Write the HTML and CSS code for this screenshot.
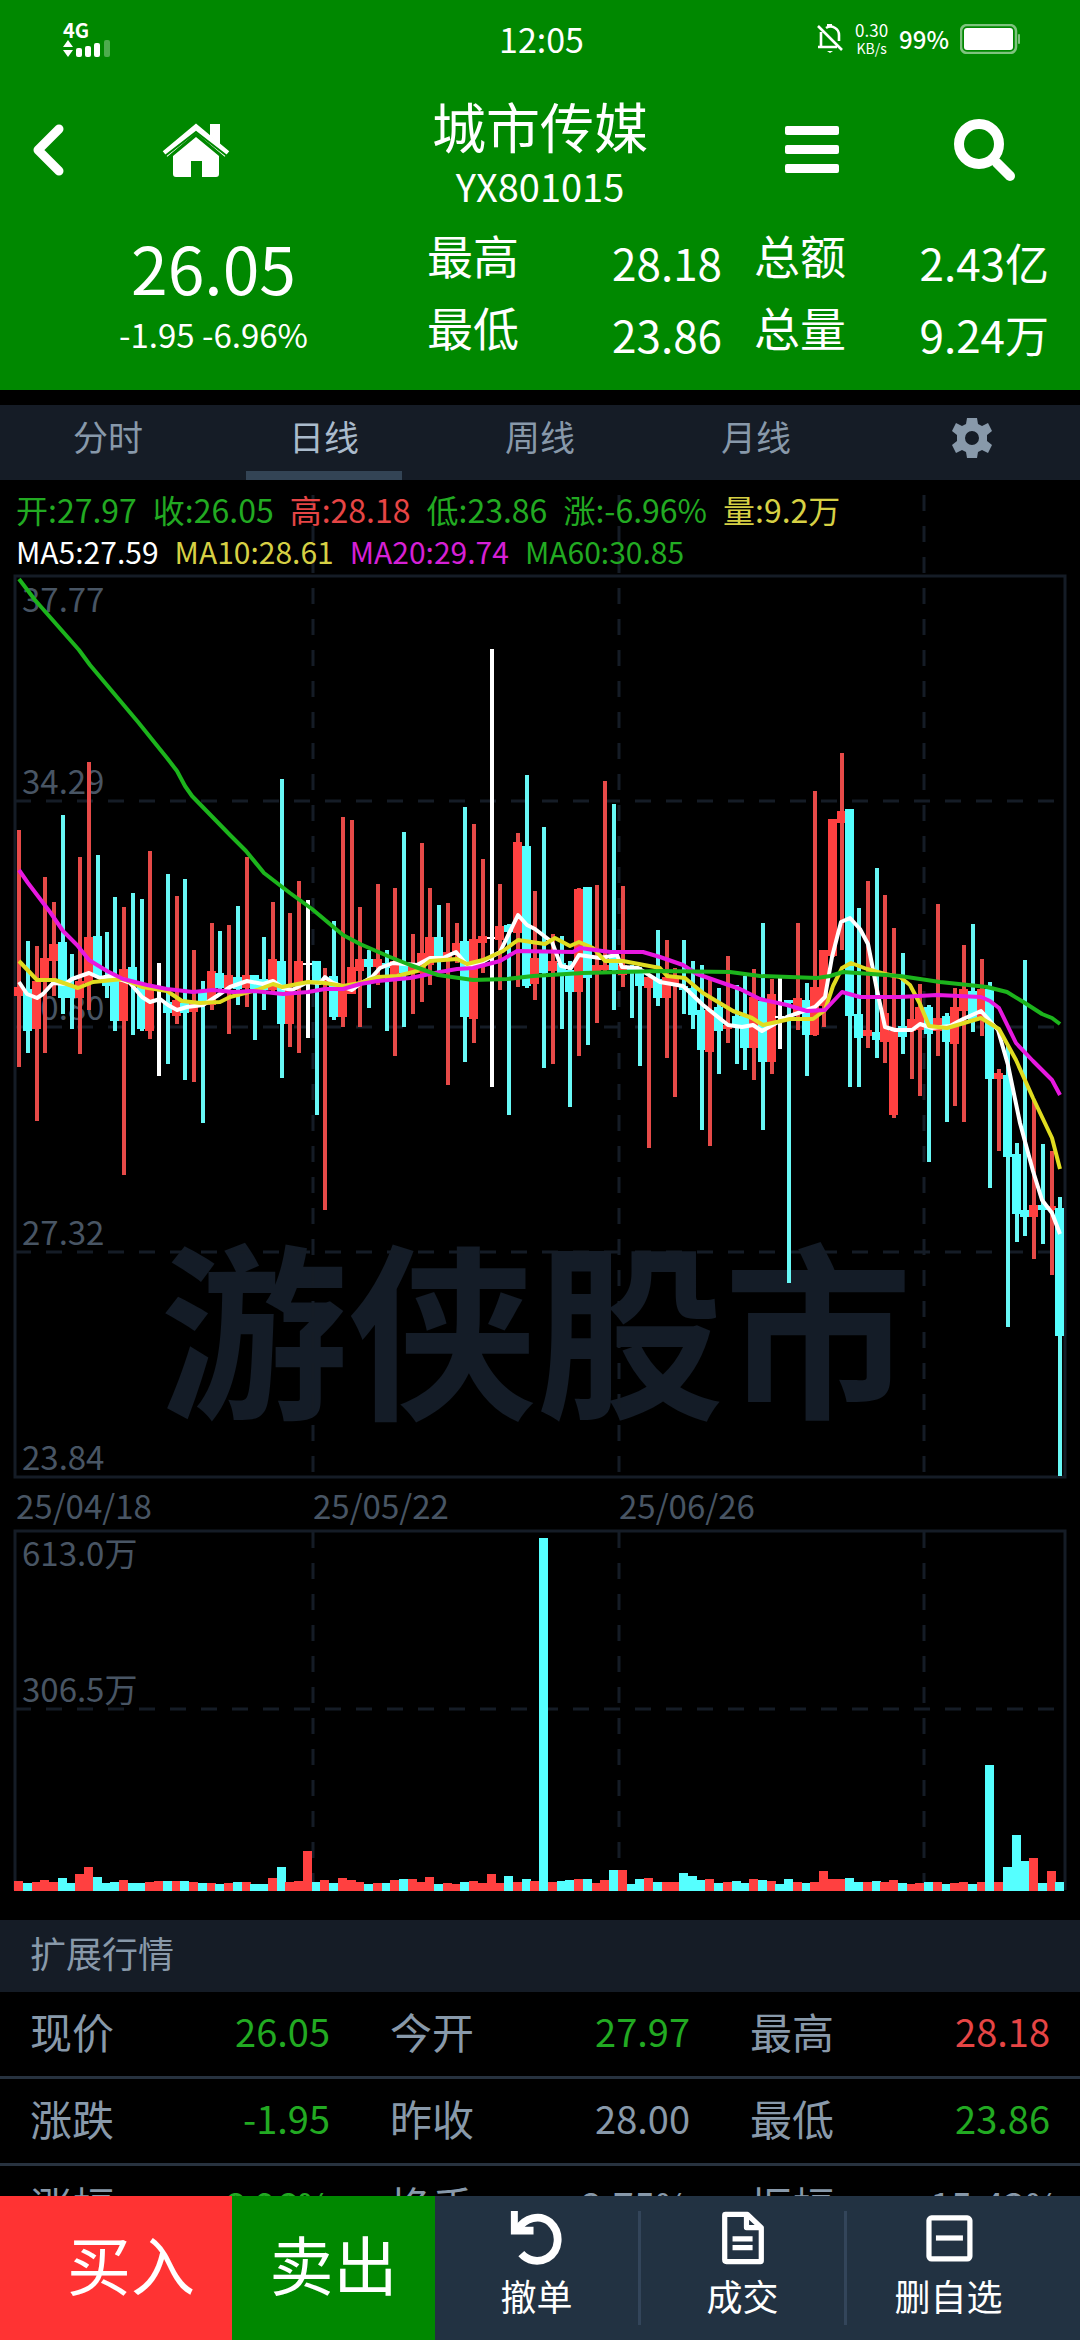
FILE: index.html
```html
<!DOCTYPE html>
<html lang="zh-CN">
<head>
    <meta charset="UTF-8">
    <meta name="viewport" content="width=device-width, initial-scale=1.0">
    <title>城市传媒 YX801015</title>
    <link rel="stylesheet" href="styles.css">
</head>
<body>
    <header class="header">
        <!-- Status bar -->
        <div class="status">
            <div class="status-left">
                <span class="network">4G</span>
                <svg width="48" height="18" viewBox="0 0 48 18" fill="#fff">
                    <path d="M0 7l5-7 5 7zM0 10l5 7 5-7z"/>
                    <rect x="13" y="8" width="6" height="9" rx="2"/>
                    <rect x="22" y="6" width="6" height="11" rx="2"/>
                    <rect x="31" y="3" width="6" height="14" rx="2"/>
                    <rect x="41" y="0" width="6" height="17" rx="2" opacity="0.3"/>
                </svg>
            </div>
            <span class="clock">12:05</span>
            <div class="status-right">
                <svg width="28" height="30" viewBox="0 0 28 30" fill="none" stroke="#fff" stroke-width="2.6">
                    <path d="M2 2L26 26M5 8v15M2 23h19M10 4c6-4 13 1 13 7v6"/>
                    <path d="M11 27h6l-3 2z" fill="#fff" stroke="none"/>
                    <path d="M11 1h5" />
                </svg>
                <span class="speed"><span>0.30</span><span class="unit">KB/s</span></span>
                <span class="percent">99%</span>
                <svg width="60" height="30" viewBox="0 0 60 30">
                    <rect x="1" y="1" width="55" height="28" rx="6" fill="none" stroke="#7fc37f" stroke-width="2.5"/>
                    <rect x="4" y="4" width="49" height="22" rx="3" fill="#fff"/>
                    <rect x="58" y="10" width="2" height="10" rx="1" fill="#7fc37f"/>
                </svg>
            </div>
        </div>

        <!-- Title row -->
        <nav class="nav">
            <button type="button" class="back" aria-label="返回">
                <svg width="34" height="54" viewBox="0 0 34 54" fill="none" stroke="#fff" stroke-width="9" stroke-linecap="round" stroke-linejoin="round"><path d="M27 6L6 27l21 21"/></svg>
            </button>
            <button type="button" aria-label="首页">
                <svg width="68" height="54" viewBox="0 0 68 54" fill="#fff">
                    <path d="M34 14l23 19v18q0 3-3 3H40V38H29v16H14q-3 0-3-3V33z"/>
                    <path d="M3 31L34 5l31 26" fill="none" stroke="#fff" stroke-width="7"/>
                    <path d="M3 33L34 9l31 24" fill="none" stroke="#008800" stroke-width="2"/>
                    <path d="M48 1h10v21L48 13z"/>
                </svg>
            </button>
            <div class="stock">
                <h1 class="name">城市传媒</h1>
                <span class="code">YX801015</span>
            </div>
            <button type="button" aria-label="菜单">
                <svg width="54" height="48" viewBox="0 0 54 48" fill="#fff">
                    <rect width="54" height="9" rx="2"/>
                    <rect y="19" width="54" height="9" rx="2"/>
                    <rect y="38" width="54" height="9" rx="2"/>
                </svg>
            </button>
            <button type="button" aria-label="搜索">
                <svg width="68" height="62" viewBox="0 0 68 62" fill="none" stroke="#fff">
                    <circle cx="25" cy="25" r="20" stroke-width="10"/>
                    <path d="M43 44l13 13" stroke-width="10" stroke-linecap="round"/>
                    <path d="M38 38l6 6" stroke-width="6"/>
                </svg>
            </button>
        </nav>

        <!-- Quote -->
        <section class="quote">
            <div class="quote-main">
                <strong class="price">26.05</strong>
                <span class="change">-1.95 -6.96%</span>
            </div>
            <dl class="stats">
                <div class="stat"><dt>最高</dt><dd>28.18</dd></div>
                <div class="stat"><dt>总额</dt><dd>2.43亿</dd></div>
                <div class="stat"><dt>最低</dt><dd>23.86</dd></div>
                <div class="stat"><dt>总量</dt><dd>9.24万</dd></div>
            </dl>
        </section>
    </header>

    <main>
        <div class="tabs">
            <button type="button" class="tab">分时</button>
            <button type="button" class="tab active">日线</button>
            <button type="button" class="tab">周线</button>
            <button type="button" class="tab">月线</button>
            <button type="button" class="tab" aria-label="设置">
                <svg width="40" height="40" viewBox="-20 -20 40 40" fill="#8899aa">
                    <path fill-rule="evenodd" d="M-5-20H5L6-14 10-12 16-15 20-7 15-3V3L20 7 16 15 10 12 6 14 5 20H-5L-6 14-10 12-16 15-20 7-15 3V-3L-20-7-16-15-10-12-6-14zM0-7a7 7 0 1 0 0 14a7 7 0 1 0 0-14z"/>
                </svg>
            </button>
        </div>

        <!-- K line chart -->
        <section class="chart">
            <div class="legend">
                <p class="legend-line">
                    <span class="green">开:27.97</span>
                    <span class="green">收:26.05</span>
                    <span class="red">高:28.18</span>
                    <span class="green">低:23.86</span>
                    <span class="green">涨:-6.96%</span>
                    <span class="yellow">量:9.2万</span>
                </p>
                <p class="legend-line ma">
                    <span class="white">MA5:27.59</span>
                    <span class="yellow">MA10:28.61</span>
                    <span class="magenta">MA20:29.74</span>
                    <span class="green">MA60:30.85</span>
                </p>
            </div>
            <svg id="kline" class="kline" viewBox="0 480 1080 1420">
                <text class="watermark" x="160" y="1404">游侠股市</text>
                <g class="grid">
                    <path d="M15 801H1064M15 1027H1064M15 1252H1064M15 1709H1064" stroke-dasharray="16 15"/>
                    <path d="M313 495V1476M619 495V1476M924 495V1476M313 1532V1890M619 1532V1890M924 1532V1890" stroke-dasharray="16 15"/>
                    <path d="M15 576H1065V1477H15zM15 1890V1531H1065V1890"/>
                </g>
                <g class="axis">
                    <text x="22" y="612">37.77</text>
                    <text x="22" y="794">34.29</text>
                    <text x="22" y="1020">30.80</text>
                    <text x="22" y="1245">27.32</text>
                    <text x="22" y="1470">23.84</text>
                    <text x="16" y="1519">25/04/18</text>
                    <text x="313" y="1519">25/05/22</text>
                    <text x="619" y="1519">25/06/26</text>
                    <text x="22" y="1566">613.0万</text>
                    <text x="22" y="1702">306.5万</text>
                </g>
                <g id="candles"></g>
                <g id="volumes"></g>
                <g id="lines"></g>
            </svg>
        </section>

        <!-- Extended quote -->
        <h2 class="ext-title">扩展行情</h2>
        <table class="ext">
            <tr>
                <th>现价</th><td class="green">26.05</td>
                <th>今开</th><td class="green">27.97</td>
                <th>最高</th><td class="red">28.18</td>
            </tr>
            <tr>
                <th>涨跌</th><td class="green">-1.95</td>
                <th>昨收</th><td>28.00</td>
                <th>最低</th><td class="green">23.86</td>
            </tr>
            <tr>
                <th>涨幅</th><td class="green">-6.96%</td>
                <th>换手</th><td>2.75%</td>
                <th>振幅</th><td>15.43%</td>
            </tr>
        </table>
    </main>

    <!-- Trade bar -->
    <footer class="trade">
        <button type="button" class="buy">买入</button>
        <button type="button" class="sell">卖出</button>
        <div class="tools">
            <button type="button" class="tool">
                <svg width="60" height="62" viewBox="0 0 60 62">
                    <path d="M8 21C16 8 33 3 45 13C58 25 56 46 42 54C31 60 19 57 12 49" fill="none" stroke="#fff" stroke-width="9"/>
                    <path d="M0 0H8V18H26V27H0z" fill="#fff"/>
                </svg>
                撤单
            </button>
            <button type="button" class="tool">
                <svg width="60" height="62" viewBox="0 0 60 62" fill="none" stroke="#fff" stroke-width="6" stroke-linejoin="round">
                    <path d="M10 4h25l16 15v38q0 1-1 1H11q-2 0-2-2V5q0-1 1-1zM34 4v15h17"/>
                    <path d="M18 32h23M18 42h23"/>
                </svg>
                成交
            </button>
            <button type="button" class="tool">
                <svg width="60" height="62" viewBox="0 0 60 62" fill="none" stroke="#fff" stroke-width="6">
                    <rect x="7" y="8" width="47" height="47" rx="3"/>
                    <path d="M15 31h31"/>
                </svg>
                删自选
            </button>
        </div>
    </footer>
    <script src="chart.js"></script>
</body>
</html>
```
FILE: styles.css
```css
body {
    margin: 0;
    background: #000;
    color: #8899aa;
    font-family: "Noto Sans CJK SC", "Noto Sans", sans-serif;
    font-weight: 400;
}

h1, h2, p, dl, dd {
    margin: 0;
    font-weight: inherit;
}

button {
    display: flex;
    align-items: center;
    justify-content: center;
    padding: 0;
    border: none;
    background: none;
    color: inherit;
    font: inherit;
    cursor: pointer;
}

svg {
    display: block;
}

/* Header */
.header {
    background: #008800;
    color: #fff;
}

.status {
    display: grid;
    grid-template-columns: 1fr auto 1fr;
    align-items: center;
    height: 78px;
    padding: 0 60px 0 63px;
}

.network {
    display: block;
    font-size: 20px;
    line-height: 20px;
    font-weight: 700;
}

.clock {
    font-size: 34px;
    line-height: 40px;
}

.status-right {
    display: flex;
    align-items: center;
    justify-content: flex-end;
    gap: 11px;
}

.speed {
    display: flex;
    flex-direction: column;
    align-items: center;
    font-size: 17px;
    line-height: 19px;
}

.unit {
    font-size: 14px;
}

.percent {
    font-size: 24px;
    line-height: 30px;
    font-weight: 500;
}

.nav {
    display: grid;
    grid-template-columns: 98px 196px 1fr 168px 184px;
    align-items: center;
    height: 144px;
}

.stock {
    display: flex;
    flex-direction: column;
    align-items: center;
    gap: 6px;
    padding-top: 6px;
    padding-left: 58px;
}

.name {
    font-size: 54px;
    line-height: 60px;
}

.code {
    font-size: 38px;
    line-height: 48px;
}

.quote {
    display: flex;
    height: 168px;
    padding-right: 31px;
}

.quote-main {
    display: flex;
    flex: 0 0 427px;
    flex-direction: column;
    align-items: center;
    gap: 6px;
    padding-top: 4px;
}

.price {
    font-size: 66px;
    line-height: 80px;
    font-weight: inherit;
}

.change {
    font-size: 33px;
    line-height: 44px;
}

.stats {
    display: grid;
    flex: 1;
    grid-template-columns: 1fr 1fr;
    grid-auto-rows: 72px;
    column-gap: 32px;
}

.stat {
    display: flex;
    justify-content: space-between;
    font-size: 46px;
    line-height: 64px;
}

.stat dd {
    padding-top: 8px;
    font-size: 44px;
}

/* Tabs */
.tabs {
    display: flex;
    margin-top: 15px;
    background: #151c26;
}

.tab {
    position: relative;
    flex: 1;
    height: 75px;
    padding-bottom: 14px;
    font-size: 35px;
    line-height: 50px;
}

.tab svg {
    margin-top: 4px;
}

.tab.active {
    color: #aabbcc;
}

.tab.active::after {
    content: "";
    position: absolute;
    bottom: 0;
    left: 30px;
    right: 30px;
    height: 9px;
    background: #334455;
}

/* Chart */
.chart {
    position: relative;
}

.legend {
    position: absolute;
    top: 15px;
    left: 16px;
    font-size: 32px;
    line-height: 28px;
}

.legend-line {
    display: flex;
    gap: 16px;
    margin-bottom: 14px;
    white-space: nowrap;
}

.ma {
    font-size: 30px;
}

.green {
    color: #22aa22;
}

.red {
    color: #e64545;
}

.yellow {
    color: #d6d044;
}

.magenta {
    color: #d620d6;
}

.white {
    color: #fff;
}

.kline {
    width: 100%;
    height: auto;
}

.grid path {
    fill: none;
    stroke: #151c26;
    stroke-width: 3;
}

.axis text {
    fill: #485564;
    font-size: 33px;
}

.watermark {
    fill: #141c27;
    font-size: 188px;
    font-weight: 700;
}

/* Extended quote */
.ext-title {
    margin-top: 20px;
    padding: 0 30px 8px;
    background: #151c26;
    font-size: 36px;
    line-height: 64px;
}

.ext {
    width: 100%;
    border-collapse: collapse;
    table-layout: fixed;
    margin-bottom: 60px;
}

.ext th,
.ext td {
    height: 78px;
    padding: 0 30px 6px;
    border-bottom: 3px solid #27323f;
    font-size: 38px;
    line-height: 60px;
    text-align: right;
    white-space: nowrap;
}

.ext th {
    font-size: 42px;
    font-weight: inherit;
    text-align: left;
}

/* Trade bar */
.trade {
    position: fixed;
    left: 0;
    right: 0;
    bottom: 0;
    display: flex;
    height: 144px;
    background: #223242;
    color: #fff;
}

.buy,
.sell {
    flex: 0 0 203px;
    padding-bottom: 12px;
    font-size: 64px;
}

.buy {
    flex-basis: 232px;
    padding-left: 30px;
    background: #ff3333;
}

.sell {
    background: #008800;
}

.tools {
    display: flex;
    flex: 1;
    align-items: center;
    padding-right: 30px;
}

.tool {
    flex: 1;
    flex-direction: column;
    gap: 8px;
    height: 114px;
    padding-bottom: 8px;
    border-right: 3px solid #33455a;
    font-size: 36px;
    line-height: 44px;
}

.tool:last-child {
    border-right: none;
}
```
FILE: chart.js
```js
// [color, high, low, body top, body bottom, volume]
// r = up, c = down, w / x = flat (volume drawn red / cyan)
const candles = [
    ['r', 830, 1067, 987, 996, 10], ['c', 941, 1053, 989, 1031, 8], ['r', 946, 1121, 981, 1029, 9],
    ['r', 877, 1053, 958, 981, 11], ['r', 902, 996, 944, 961, 9], ['c', 815, 1014, 942, 998, 13],
    ['c', 954, 1029, 986, 998, 8], ['r', 857, 1054, 981, 998, 17], ['r', 762, 1010, 937, 983, 24],
    ['c', 855, 977, 936, 977, 14], ['c', 932, 998, 977, 986, 8], ['c', 897, 1031, 977, 1021, 9],
    ['r', 907, 1175, 969, 1021, 11], ['c', 893, 1035, 967, 984, 8], ['c', 899, 1031, 986, 1029, 8],
    ['r', 851, 1039, 988, 1031, 9], ['w', 963, 1076, 1000, 1002, 10], ['c', 874, 1064, 1002, 1013, 10],
    ['r', 896, 1024, 1000, 1016, 10], ['c', 879, 1080, 1003, 1013, 10], ['r', 950, 1082, 1001, 1012, 9],
    ['c', 981, 1123, 992, 1005, 8], ['r', 923, 1010, 971, 1005, 8], ['c', 931, 990, 973, 988, 7],
    ['r', 925, 1034, 975, 988, 8], ['c', 906, 1005, 977, 989, 9], ['r', 857, 1007, 975, 988, 9],
    ['c', 975, 1040, 975, 989, 7], ['c', 937, 1010, 979, 990, 7], ['r', 902, 994, 959, 990, 13],
    ['c', 779, 1078, 961, 1024, 24], ['r', 913, 1047, 988, 1024, 9], ['r', 881, 1053, 961, 986, 10],
    ['w', 900, 1038, 963, 965, 40], ['c', 961, 1115, 961, 983, 9], ['r', 968, 1210, 979, 984, 11],
    ['c', 921, 1020, 976, 1017, 8], ['r', 817, 1027, 986, 1017, 13], ['r', 820, 994, 967, 994, 11],
    ['r', 907, 1027, 959, 971, 9], ['c', 950, 1008, 959, 967, 7], ['r', 884, 985, 959, 967, 8],
    ['c', 950, 1031, 963, 968, 8], ['r', 888, 1056, 961, 975, 11], ['c', 832, 1027, 963, 973, 12],
    ['r', 934, 1014, 965, 971, 12], ['r', 843, 1002, 953, 973, 9], ['r', 888, 985, 937, 965, 14],
    ['c', 905, 971, 937, 960, 7], ['r', 903, 1085, 952, 961, 8], ['r', 923, 963, 943, 954, 7],
    ['c', 807, 1062, 941, 1017, 9], ['r', 824, 1043, 939, 1019, 10], ['r', 859, 973, 936, 943, 8],
    ['w', 649, 1087, 937, 939, 17], ['r', 884, 990, 926, 940, 8], ['c', 924, 1115, 925, 932, 15],
    ['r', 833, 987, 842, 933, 9], ['c', 775, 988, 846, 986, 12], ['r', 891, 1000, 958, 984, 10],
    ['c', 827, 1068, 952, 973, 353], ['r', 934, 1064, 961, 971, 9], ['c', 936, 1029, 963, 973, 10],
    ['c', 961, 1107, 970, 992, 11], ['r', 888, 1056, 889, 992, 12], ['c', 887, 1045, 887, 978, 12],
    ['r', 885, 1023, 965, 973, 8], ['r', 781, 971, 965, 970, 11], ['c', 804, 1010, 956, 970, 21],
    ['r', 886, 987, 965, 975, 21], ['c', 965, 1018, 967, 971, 7], ['c', 967, 1066, 969, 986, 12],
    ['r', 977, 1148, 977, 988, 13], ['c', 930, 1006, 979, 998, 9], ['r', 940, 1058, 977, 998, 9],
    ['r', 968, 1097, 977, 986, 9], ['c', 940, 1014, 986, 990, 18], ['c', 961, 1029, 988, 1015, 15],
    ['c', 965, 1130, 1010, 1050, 11], ['r', 979, 1146, 1010, 1052, 12], ['c', 988, 1074, 1007, 1031, 8],
    ['r', 956, 1043, 1025, 1029, 9], ['c', 985, 1064, 1016, 1027, 10], ['c', 976, 1070, 1016, 1048, 8],
    ['r', 969, 1080, 997, 1048, 12], ['c', 923, 1130, 1001, 1062, 11], ['r', 979, 1074, 994, 1062, 10],
    ['x', 977, 1049, 1016, 1018, 7], ['c', 1000, 1283, 1000, 1003, 12], ['r', 923, 1030, 998, 1013, 9],
    ['c', 983, 1076, 1000, 1035, 8], ['r', 791, 1036, 987, 1035, 9], ['r', 950, 1027, 950, 1006, 20],
    ['r', 819, 957, 819, 956, 12], ['r', 753, 950, 811, 823, 12], ['c', 809, 1087, 809, 1016, 13],
    ['c', 908, 1087, 1014, 1038, 9], ['r', 881, 1048, 1030, 1036, 9], ['c', 868, 1058, 1032, 1040, 10],
    ['r', 895, 1063, 1013, 1042, 9], ['r', 928, 1118, 1031, 1115, 11], ['c', 953, 1054, 1026, 1037, 8],
    ['r', 997, 1079, 1019, 1031, 7], ['r', 984, 1096, 1007, 1030, 8], ['c', 1005, 1162, 1007, 1034, 9],
    ['r', 904, 1056, 1018, 1031, 9], ['c', 1013, 1122, 1016, 1042, 7], ['r', 988, 1106, 1007, 1044, 8],
    ['r', 945, 1122, 989, 1011, 9], ['c', 924, 1032, 991, 1021, 7], ['r', 959, 1036, 989, 1019, 9],
    ['c', 982, 1188, 989, 1079, 126], ['r', 1069, 1151, 1073, 1079, 9], ['c', 1045, 1327, 1075, 1157, 24],
    ['c', 1143, 1242, 1154, 1214, 56], ['c', 960, 1236, 1210, 1217, 30], ['r', 1100, 1259, 1205, 1217, 33],
    ['c', 1144, 1244, 1205, 1210, 8], ['r', 1151, 1275, 1206, 1210, 20], ['c', 1197, 1476, 1208, 1336, 9]
];

const averages = {
    // MA5
    '#ffffff': '19,982 27,994 37,998 43,994 53,983 65,984 72,979 89,973 100,978 110,976 122,980 130,983 142,997 150,1002 160,999 168,1005 177,1010 187,1007 203,1005 217,996 230,987 247,981 263,984 273,981 283,988 292,990 308,982 320,983 325,977 333,983 352,990 360,984 372,977 380,968 393,963 417,965 430,958 443,958 456,952 467,965 477,965 500,952 518,915 527,925 535,929 552,942 561,966 571,968 579,955 600,958 617,955 622,967 638,968 660,982 683,986 703,1005 728,1025 742,1027 753,1025 762,1031 787,1017 815,1007 825,997 832,957 841,922 850,918 860,929 868,944 877,990 885,1027 895,1030 912,1030 920,1024 932,1028 950,1026 963,1019 981,1011 998,1030 1008,1065 1020,1123 1033,1171 1042,1200 1052,1213 1060,1234',
    // MA10
    '#e0dc20': '19,961 37,980 55,980 78,988 93,982 123,979 142,987 167,991 182,1001 200,1003 220,1002 230,997 257,990 273,984 282,987 308,982 325,983 343,986 360,983 378,977 397,976 417,971 430,961 457,959 467,964 483,960 503,951 518,940 545,944 555,938 570,946 579,942 593,948 605,961 623,961 660,968 667,976 685,978 703,993 733,1011 752,1018 763,1025 790,1019 813,1019 825,1010 833,986 842,968 851,963 867,969 885,974 900,977 910,985 920,1004 929,1026 947,1028 981,1018 999,1029 1016,1060 1033,1098 1052,1138 1060,1169',
    // MA20
    '#e818e0': '19,870 28,883 50,912 63,931 77,945 89,960 107,971 123,979 147,985 167,989 193,992 213,990 233,992 253,991 283,994 308,992 325,989 343,989 360,984 378,981 410,978 440,972 457,969 473,968 500,961 517,951 573,952 580,948 610,952 643,952 660,957 683,965 697,974 740,989 760,999 787,1005 807,1011 825,1010 842,992 860,997 900,997 937,995 981,997 990,1001 999,1008 1016,1043 1033,1061 1052,1080 1060,1095',
    // MA60
    '#1cb41c': '19,579 35,600 79,650 90,665 138,722 167,758 177,771 185,786 192,796 230,835 246,851 264,873 290,893 312,909 343,935 360,944 390,957 410,965 438,975 473,980 507,979 533,976 583,973 660,971 730,972 760,976 817,978 830,976 843,972 900,976 940,982 987,987 1007,992 1025,1003 1042,1014 1052,1018 1060,1024'
};

const bodyColors = { r: '#ff4040', c: '#55ffff', w: '#ffffff', x: '#ffffff' };
const wickColors = { r: '#e64a48', c: '#68f8f6', w: '#ffffff', x: '#ffffff' };
const volumeColors = { r: '#ff4040', c: '#55ffff', w: '#ff4040', x: '#55ffff' };

const STEP = 8.75;
const LEFT = 14.5;
const BASELINE = 1891;

function add(parent, tag, attrs) {
    const el = document.createElementNS('http://www.w3.org/2000/svg', tag);
    for (const key in attrs) {
        el.setAttribute(key, attrs[key]);
    }
    document.getElementById(parent).appendChild(el);
}

candles.forEach(([color, high, low, top, bottom, volume], i) => {
    const x = Math.floor(LEFT + i * STEP);
    add('candles', 'rect', { x: x + 3, y: high, width: 4, height: low - high, fill: wickColors[color] });
    add('candles', 'rect', { x: x, y: top, width: 9, height: bottom - top, fill: bodyColors[color] });
    add('volumes', 'rect', { x: x, y: BASELINE - volume, width: 9, height: volume, fill: volumeColors[color] });
});

for (const color in averages) {
    add('lines', 'polyline', {
        points: averages[color],
        fill: 'none',
        stroke: color,
        'stroke-width': 4,
        'stroke-linejoin': 'round'
    });
}
```
